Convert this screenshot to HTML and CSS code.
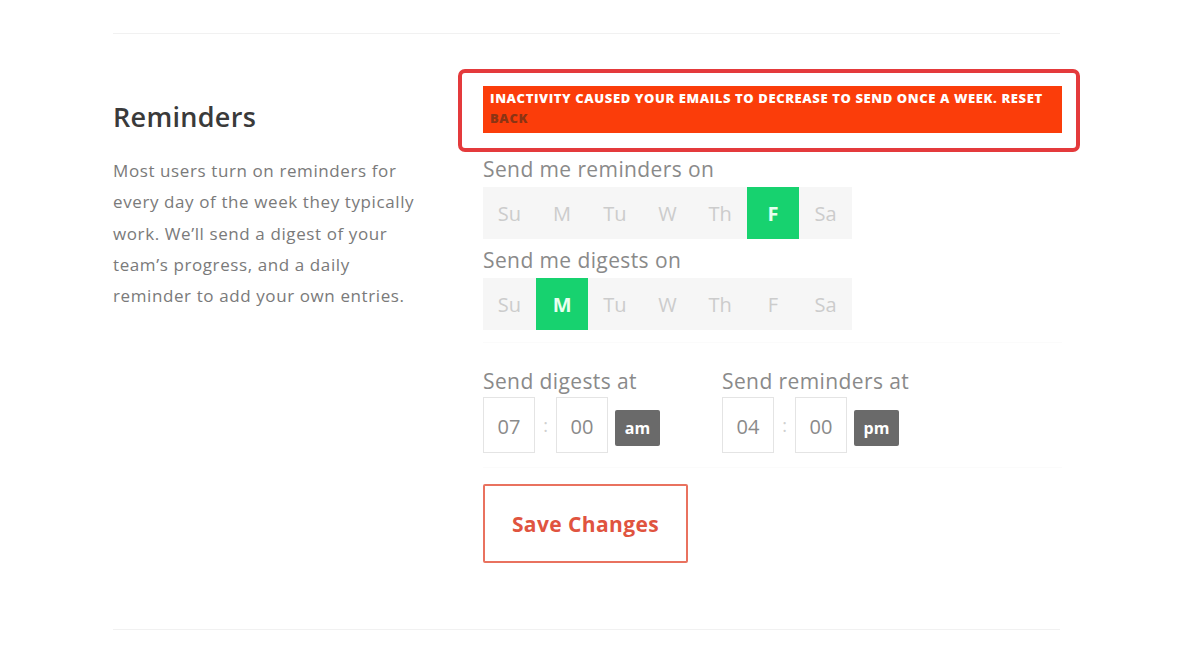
FILE: index.html
```html
<!DOCTYPE html>
<html lang="en">
<head>
<meta charset="utf-8">
<title>Reminders</title>
<link rel="stylesheet" href="styles.css">
</head>
<body>
<div class="page">
  <section class="section">
    <div class="intro">
      <h2 class="intro-title">Reminders</h2>
      <p class="intro-text">Most users turn on reminders for every day of the week they typically work. We’ll send a digest of your team’s progress, and a daily reminder to add your own entries.</p>
    </div>
    <div class="settings">
      <div class="highlight">
        <div class="alert">INACTIVITY CAUSED YOUR EMAILS TO DECREASE TO SEND ONCE A WEEK. RESET <span class="alert-link">BACK</span></div>
      </div>
      <div class="field-label">Send me reminders on</div>
      <div class="days">
        <span class="day">Su</span><span class="day">M</span><span class="day">Tu</span><span class="day">W</span><span class="day">Th</span><span class="day day-on">F</span><span class="day">Sa</span>
      </div>
      <div class="field-label">Send me digests on</div>
      <div class="days">
        <span class="day">Su</span><span class="day day-on">M</span><span class="day">Tu</span><span class="day">W</span><span class="day">Th</span><span class="day">F</span><span class="day">Sa</span>
      </div>
      <div class="times">
        <div class="time-group">
          <div class="field-label">Send digests at</div>
          <div class="time-row">
            <span class="time-box">07</span><span class="colon">:</span><span class="time-box">00</span><span class="ampm">am</span>
          </div>
        </div>
        <div class="time-group">
          <div class="field-label">Send reminders at</div>
          <div class="time-row">
            <span class="time-box">04</span><span class="colon">:</span><span class="time-box">00</span><span class="ampm">pm</span>
          </div>
        </div>
      </div>
      <button class="save">Save Changes</button>
    </div>
  </section>
</div>
</body>
</html>
```

FILE: styles.css
```css
html, body {
  margin: 0;
  padding: 0;
  background: #ffffff;
}
body {
  font-family: "Open Sans", "Noto Sans", sans-serif;
  color: #444;
}
.page {
  padding-top: 33px;
  padding-left: 113px;
  width: 947px;
}
.section {
  border-top: 1px solid #f1f1f1;
  border-bottom: 1px solid #f1f1f1;
  display: grid;
  grid-template-columns: 370px 579px;
  padding-top: 35px;
  padding-bottom: 66px;
}
.intro-title {
  margin: 32px 0 0 0;
  font-size: 27px;
  font-weight: 600;
  line-height: 32px;
  letter-spacing: 0.3px;
  color: #3a3a3a;
}
.intro-text {
  margin: 22px 0 0 0;
  width: 316px;
  font-size: 17px;
  line-height: 31.3px;
  letter-spacing: 0.6px;
  color: #7a7a7a;
}
.highlight {
  margin-left: -25px;
  margin-right: -18px;
  border: 4px solid #e43a3c;
  border-radius: 7px;
  padding: 13px 14px 15px 21px;
}
.alert {
  background: #fb3d0a;
  color: #ffffff;
  font-size: 13px;
  font-weight: 800;
  line-height: 20px;
  letter-spacing: 0.6px;
  padding: 2px 6px 5px 7px;
}
.alert-link {
  color: #8b3414;
}
.field-label {
  font-size: 21px;
  line-height: 26px;
  letter-spacing: 0.4px;
  color: #8a8a8a;
}
.settings > .field-label {
  margin-top: 4px;
}
.days {
  margin-top: 5px;
  width: 369px;
  height: 52px;
  background: #f6f6f6;
  display: grid;
  grid-template-columns: repeat(7, 1fr);
}
.day {
  display: flex;
  align-items: center;
  justify-content: center;
  font-size: 20px;
  color: #cccccc;
}
.day-on {
  background: #17d26f;
  color: #e8fff0;
  font-weight: 700;
}
.days + .field-label {
  margin-top: 8px;
}
.times {
  margin-top: 12px;
  border-top: 1px solid #fbfbfb;
  border-bottom: 1px solid #fbfbfb;
  padding-top: 25px;
  padding-bottom: 14px;
  display: flex;
  gap: 0;
}
.time-group {
  width: 239px;
}
.time-row {
  margin-top: 3px;
  display: flex;
  align-items: center;
}
.time-box {
  width: 50px;
  height: 54px;
  border: 1px solid #e4e4e4;
  display: flex;
  align-items: center;
  justify-content: center;
  padding-top: 3px;
  box-sizing: content-box;
  height: 51px;
  font-size: 20px;
  color: #8a8a8a;
}
.colon {
  width: 21px;
  text-align: center;
  font-size: 18px;
  color: #d0d0d0;
}
.ampm {
  margin-left: 7px;
  width: 45px;
  height: 36px;
  margin-top: 6px;
  background: #6a6a6a;
  border-radius: 2px;
  color: #ffffff;
  font-size: 16px;
  font-weight: 700;
  display: flex;
  align-items: center;
  justify-content: center;
}
.save {
  margin-top: 16px;
  width: 205px;
  height: 79px;
  background: #ffffff;
  border: 2px solid #e9725f;
  border-radius: 2px;
  color: #e0543f;
  font-family: "Open Sans", "Noto Sans", sans-serif;
  font-size: 21px;
  font-weight: 700;
  letter-spacing: 0.4px;
  cursor: pointer;
}
```
